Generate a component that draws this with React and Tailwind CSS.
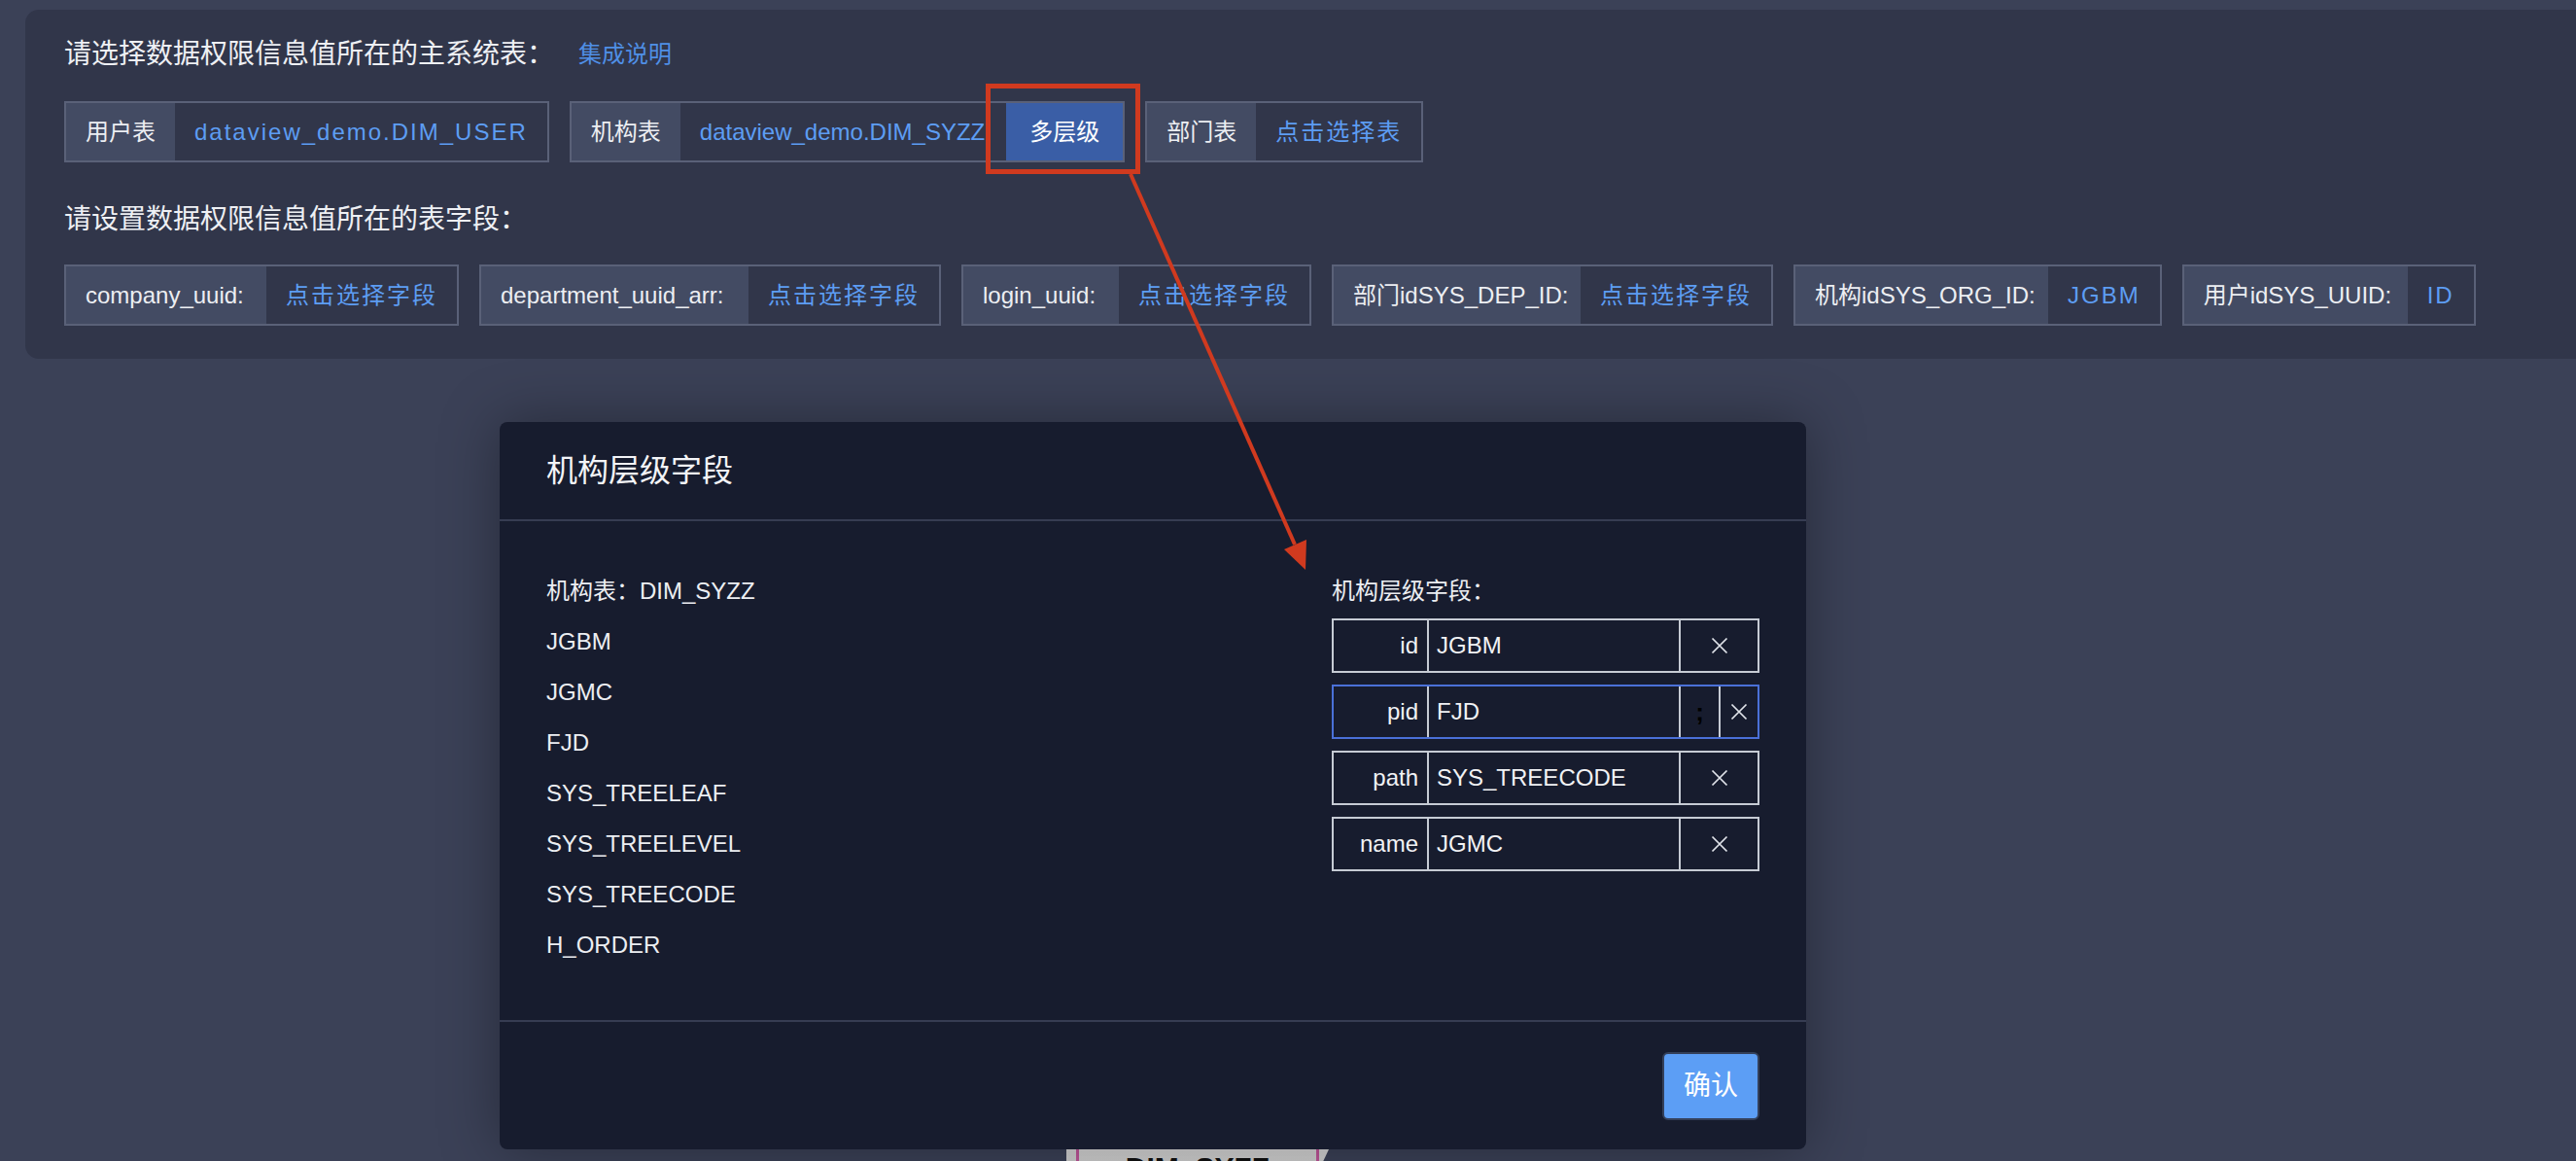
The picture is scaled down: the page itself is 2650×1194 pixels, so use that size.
import React from 'react';

const FONT = "font-['Liberation_Sans','Noto_Sans_CJK_SC',sans-serif]";

const TableBox = ({ label, value, labelW, spaced = true, children }) => (
  <div className="flex h-[63px] border-2 border-[#5a6178]">
    <div
      className={`flex shrink-0 items-center whitespace-nowrap bg-[#434b63] text-[24px] text-[#eceef2] ${
        labelW ? `pl-[20px] ${labelW}` : 'px-[20px]'
      }`}
    >
      {label}
    </div>
    <div
      className={`flex items-center whitespace-nowrap px-[20px] text-[24px] text-[#5d9df3] ${
        spaced ? 'tracking-[2px]' : 'pr-[22px]'
      }`}
    >
      {value}
    </div>
    {children}
  </div>
);

const XIcon = () => (
  <svg width="18" height="18" viewBox="0 0 18 18" className="block">
    <path d="M1.5 1.5 L16.5 16.5 M16.5 1.5 L1.5 16.5" stroke="#e1e4ea" strokeWidth="1.7" fill="none" />
  </svg>
);

const LevelRow = ({ label, value, active }) => (
  <div className={`flex h-[56px] border-2 ${active ? 'border-[#4a70d8]' : 'border-[#c6cbd4]'}`}>
    <div className="flex w-[96px] items-center justify-end pr-[9px] text-[24px] text-[#f1f2f5]">{label}</div>
    <div className="flex w-[259px] items-center border-l-2 border-[#c6cbd4] pl-[8px] text-[24px] text-[#f1f2f5]">
      {value}
    </div>
    {active ? (
      <>
        <div className="flex w-[41px] items-center justify-center border-l-2 border-[#c6cbd4] text-[26px] font-bold text-[#000]">
          ;
        </div>
        <div className="flex flex-1 items-center justify-center border-l-2 border-[#c6cbd4]">
          <XIcon />
        </div>
      </>
    ) : (
      <div className="flex flex-1 items-center justify-center border-l-2 border-[#c6cbd4]">
        <XIcon />
      </div>
    )}
  </div>
);

const fields = [
  ['company_uuid:', '点击选择字段', 'w-[206px]'],
  ['department_uuid_arr:', '点击选择字段', 'w-[275px]'],
  ['login_uuid:', '点击选择字段', 'w-[160px]'],
  ['部门idSYS_DEP_ID:', '点击选择字段', 'w-[254px]'],
  ['机构idSYS_ORG_ID:', 'JGBM', 'w-[260px]'],
  ['用户idSYS_UUID:', 'ID', 'w-[230px]'],
];

const columns = ['JGBM', 'JGMC', 'FJD', 'SYS_TREELEAF', 'SYS_TREELEVEL', 'SYS_TREECODE', 'H_ORDER'];

export default function App() {
  return (
    <div className={`relative h-[1194px] overflow-hidden bg-[#3b4157] ${FONT}`}>
      {/* settings panel */}
      <div className="pl-[26px] pt-[10px]">
        <div className="rounded-l-[14px] bg-[#31364a] pb-[34px] pl-[40px] pt-[26px]">
          <div className="flex h-[40px] items-center">
            <span className="text-[28px] text-[#eef0f4]">请选择数据权限信息值所在的主系统表：</span>
            <a href="#" className="ml-[25px] text-[24px] text-[#4f8fe6]">集成说明</a>
          </div>
          <div className="mt-[28px] flex gap-[21px]">
            <TableBox label="用户表" value="dataview_demo.DIM_USER" />
            <TableBox label="机构表" value="dataview_demo.DIM_SYZZ" spaced={false}>
              <div className="flex items-center bg-[#3a5ea6] px-[24px] text-[24px] text-white">多层级</div>
            </TableBox>
            <TableBox label="部门表" value="点击选择表" />
          </div>
          <div className="mt-[39px] flex h-[40px] items-center text-[28px] text-[#eef0f4]">
            请设置数据权限信息值所在的表字段：
          </div>
          <div className="mt-[26px] flex gap-[21px]">
            {fields.map(([l, v, w]) => (
              <TableBox key={l} label={l} value={v} labelW={w} />
            ))}
          </div>
        </div>
      </div>

      {/* modal */}
      <div className="relative z-10 ml-[514px] mt-[65px] flex h-[748px] w-[1344px] flex-col rounded-[8px] bg-[#171c2e] shadow-[0_0_60px_rgba(0,0,0,0.35)]">
        <div className="flex h-[102px] items-center border-b-2 border-[#363c52] px-[48px] text-[32px] text-[#f3f4f7]">
          机构层级字段
        </div>
        <div className="flex flex-1 justify-between px-[48px] pt-[46px]">
          <div className="text-[24px] text-[#eceef2]">
            <div className="h-[52px] leading-[52px]">机构表：DIM_SYZZ</div>
            {columns.map((c) => (
              <div key={c} className="h-[52px] leading-[52px]">{c}</div>
            ))}
          </div>
          <div className="w-[440px]">
            <div className="h-[52px] text-[24px] leading-[52px] text-[#eceef2]">机构层级字段：</div>
            <div className="mt-[2px] flex flex-col gap-[12px]">
              <LevelRow label="id" value="JGBM" />
              <LevelRow label="pid" value="FJD" active />
              <LevelRow label="path" value="SYS_TREECODE" />
              <LevelRow label="name" value="JGMC" />
            </div>
          </div>
        </div>
        <div className="flex h-[133px] items-center justify-end border-t-2 border-[#363c52] pr-[48px]">
          <button className="h-[70px] w-[100px] rounded-[6px] border-2 border-[#34405a] bg-[#5c9ef5] text-[28px] text-white">
            确认
          </button>
        </div>
      </div>

      {/* node peeking out under the modal */}
      <div className="ml-[1097px] h-[40px] w-[270px] bg-gradient-to-b from-[#d8d8d8] to-[#b8b8b8] [clip-path:polygon(0_0,100%_0,93%_100%,0_100%)]">
        <div className="mx-[10px] h-full border-x-[3px] border-[#c0569a] pt-[2px] text-center text-[30px] font-bold leading-[34px] text-[#111]">
          DIM_SYZZ
        </div>
      </div>

      {/* annotation: red highlight and arrow */}
      <div className="pointer-events-none absolute left-[1014px] top-[86px] z-20 h-[93px] w-[159px] border-[5px] border-[#d03a1f]" />
      <svg className="pointer-events-none absolute left-0 top-0 z-20" width="2650" height="1194">
        <line x1="1163" y1="179" x2="1332" y2="560" stroke="#d03a1f" strokeWidth="4" />
        <polygon points="1343,586 1321,565 1344,555" fill="#d03a1f" />
      </svg>
    </div>
  );
}
